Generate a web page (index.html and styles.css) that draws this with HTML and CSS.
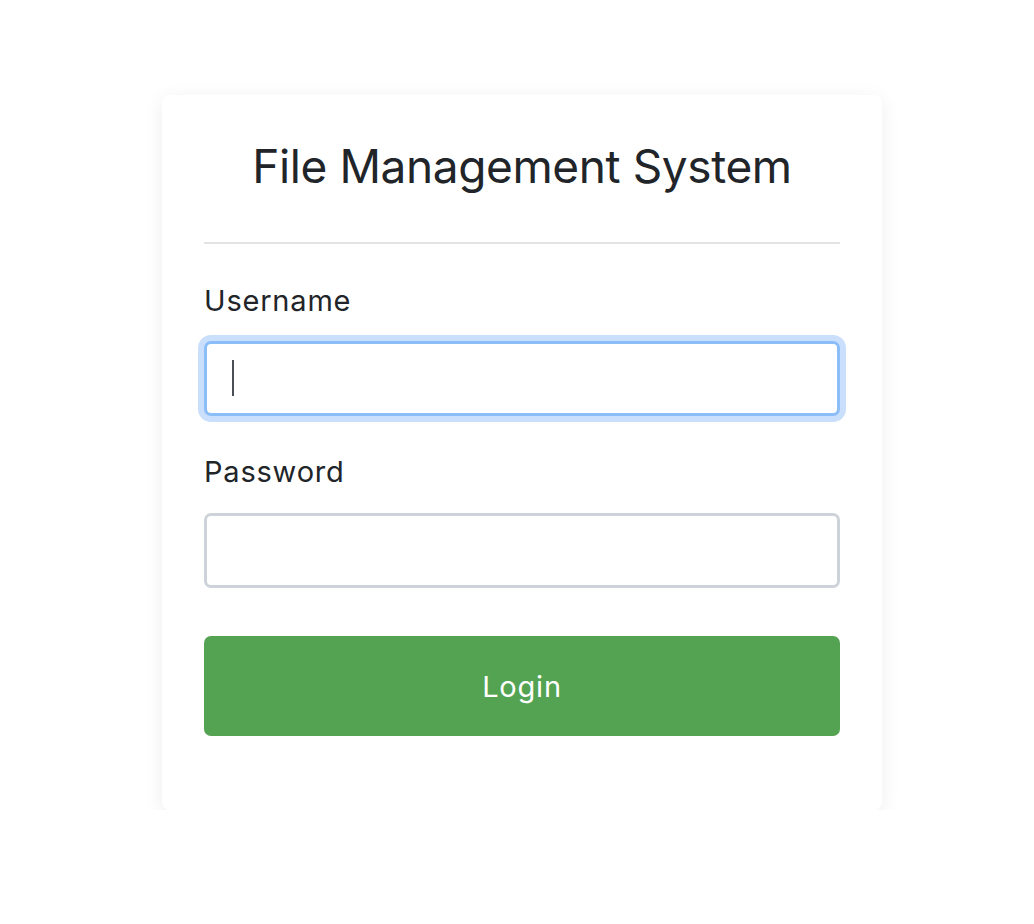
FILE: index.html
```html
<!DOCTYPE html>
<html lang="en">
<head>
<meta charset="utf-8">
<title>File Management System</title>
<link rel="stylesheet" href="styles.css">
</head>
<body>
<main class="page">
  <form class="card" onsubmit="return false">
    <h1 class="title">File Management System</h1>
    <hr class="divider">
    <div class="field">
      <label class="label" for="username">Username</label>
      <div class="input-wrap">
        <input class="input input-focus" id="username" type="text">
        <span class="caret"></span>
      </div>
    </div>
    <div class="field">
      <label class="label" for="password">Password</label>
      <input class="input" id="password" type="password">
    </div>
    <button class="btn" type="submit">Login</button>
  </form>
</main>
</body>
</html>
```

FILE: styles.css
```css
* { box-sizing: border-box; }

html, body {
  margin: 0;
  padding: 0;
  background: #ffffff;
}

body {
  font-family: Inter, "Helvetica Neue", "Liberation Sans", Arial, sans-serif;
  color: #212529;
}

.page {
  display: flex;
  justify-content: center;
  padding: 95px 0 0 10px;
}

.card {
  width: 720px;
  background: #ffffff;
  border-radius: 8px;
  box-shadow: 0 4px 20px rgba(0, 0, 0, 0.07);
  padding: 42px 42px 74px;
  display: flex;
  flex-direction: column;
}

.title {
  margin: 0;
  font-size: 46px;
  line-height: 58px;
  font-weight: 400;
  text-align: center;
  letter-spacing: -0.4px;
  color: #212529;
}

.divider {
  margin: 47px 0 0;
  border: 0;
  height: 2px;
  background: #e1e3e5;
}

.field {
  display: flex;
  flex-direction: column;
}

.label {
  margin-top: 35px;
  font-size: 29px;
  line-height: 44px;
  letter-spacing: 0.8px;
  color: #212529;
}

.field + .field .label {
  margin-top: 34px;
}

.input-wrap {
  position: relative;
  margin-top: 18px;
}

.field + .field .input {
  margin-top: 19px;
}

.input {
  display: block;
  width: 100%;
  height: 75px;
  border: 3px solid #ced3da;
  border-radius: 7px;
  background: #ffffff;
  padding: 0 26px;
  font: inherit;
  font-size: 28px;
  color: #495057;
  outline: none;
  caret-color: transparent;
}

.input-focus {
  border-color: #8bbdf8;
  box-shadow: 0 0 0 6px #c9dffb;
}

.caret {
  position: absolute;
  left: 28px;
  top: 19px;
  width: 2px;
  height: 36px;
  background: #4a4f55;
}

.btn {
  margin-top: 48px;
  height: 100px;
  border: 0;
  border-radius: 7px;
  background: #54a352;
  color: #ffffff;
  font: inherit;
  font-size: 29px;
  letter-spacing: 0.8px;
  cursor: pointer;
}
```
